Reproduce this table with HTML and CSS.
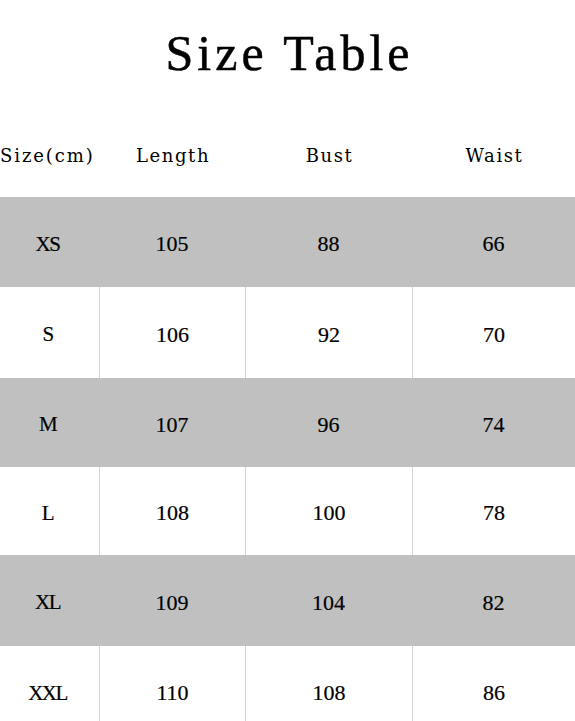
FILE: index.html
```html
<!DOCTYPE html>
<html>
<head>
<meta charset="utf-8">
<link rel="stylesheet" href="styles.css">
</head>
<body>
<div class="page">
  <h1 class="title">Size Table</h1>
  <div class="table">
    <div class="row head">
      <div class="cell">Size(cm)</div>
      <div class="cell">Length</div>
      <div class="cell">Bust</div>
      <div class="cell">Waist</div>
    </div>
    <div class="row gray r1">
      <div class="cell size">XS</div><div class="cell">105</div><div class="cell">88</div><div class="cell">66</div>
    </div>
    <div class="row white r2">
      <div class="cell size">S</div><div class="cell">106</div><div class="cell">92</div><div class="cell">70</div>
    </div>
    <div class="row gray r3">
      <div class="cell size">M</div><div class="cell">107</div><div class="cell">96</div><div class="cell">74</div>
    </div>
    <div class="row white r4">
      <div class="cell size">L</div><div class="cell">108</div><div class="cell">100</div><div class="cell">78</div>
    </div>
    <div class="row gray r5">
      <div class="cell size">XL</div><div class="cell">109</div><div class="cell">104</div><div class="cell">82</div>
    </div>
    <div class="row white r6">
      <div class="cell size">XXL</div><div class="cell">110</div><div class="cell">108</div><div class="cell">86</div>
    </div>
  </div>
</div>
</body>
</html>
```

FILE: styles.css
```css
html, body {
  margin: 0;
  padding: 0;
  background: #ffffff;
}

.page {
  width: 575px;
  height: 721px;
  overflow: hidden;
  font-family: "Liberation Serif", "Times New Roman", serif;
  color: #000;
}

.title {
  margin: 0;
  height: 107px;
  box-sizing: border-box;
  padding-top: 24px;
  text-align: center;
  font-size: 50px;
  font-weight: normal;
  line-height: 58px;
  letter-spacing: 4px;
  padding-left: 4px;
  -webkit-text-stroke: 0.5px #000;
}

.table {
  display: flex;
  flex-direction: column;
}

.row {
  display: grid;
  grid-template-columns: 99px 146px 167px 163px;
  align-items: center;
}

.cell {
  height: 100%;
  display: flex;
  align-items: center;
  justify-content: center;
  box-sizing: border-box;
  padding-top: 4px;
  font-size: 22px;
  -webkit-text-stroke: 0.2px #000;
}

.head {
  height: 90px;
}

.head .cell {
  font-family: "DejaVu Serif", serif;
  font-size: 18px;
  letter-spacing: 1.6px;
  padding-left: 2px;
  padding-top: 6px;
  -webkit-text-stroke: 0;
}

.head .cell:first-child {
  padding-left: 0;
  justify-content: flex-start;
  letter-spacing: 1.9px;
}

.gray {
  background: #c0c0c0;
}

.white .cell + .cell {
  border-left: 1px solid #d2d2d2;
}

.size {
  font-size: 21px;
  letter-spacing: -1.5px;
  padding-right: 4px;
}

.r1 { height: 90px; }
.r2 { height: 91px; }
.r3 { height: 89px; }
.r4 { height: 88px; }
.r5 { height: 91px; }
.r6 { height: 90px; }
```
